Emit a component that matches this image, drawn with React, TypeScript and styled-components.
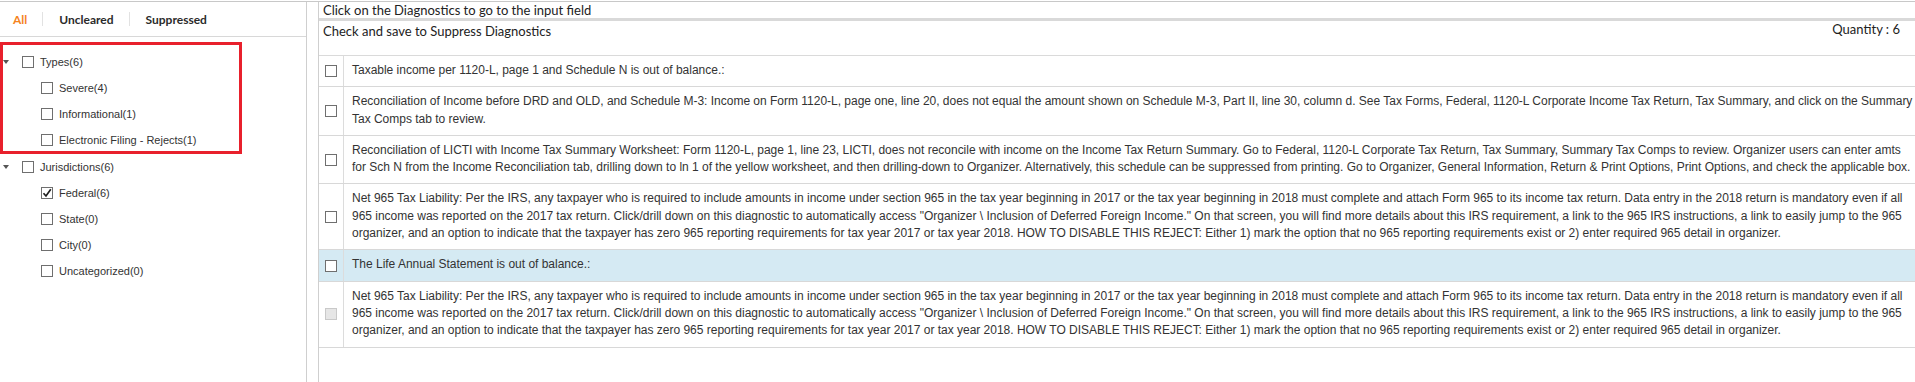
import styled, { createGlobalStyle } from "styled-components";

const GlobalStyle = createGlobalStyle`
    html, body {
        margin: 0;
        padding: 0;
        background: #ffffff;
        overflow: hidden;
    }
    * {
        box-sizing: border-box;
    }
`;

const Page = styled.div`
    display: flex;
    margin-top: 1px;
    height: 381px;
    border-top: 1px solid #c8c8c8;
    font-family: "Liberation Sans", Arial, sans-serif;
    color: #333333;
`;

/* ---------- left filter panel ---------- */

const Sidebar = styled.aside`
    width: 307px;
    flex: none;
    border-right: 1px solid #cfcfcf;
`;

const Tabs = styled.div`
    display: flex;
    align-items: center;
    height: 35px;
    border-bottom: 1px solid #d8d8d8;
    padding-left: 13px;
`;

const Tab = styled.span<{ $active?: boolean }>`
    font-family: Lato, "Open Sans", sans-serif;
    font-weight: 700;
    font-size: 12px;
    color: ${props => props.$active ? '#f5841f' : '#2b2b2b'};
    padding: 0 15px 0 16px;
    &:first-child {
        padding-left: 0;
    }
`;

const TabDivider = styled.span`
    width: 1px;
    height: 14px;
    background: #e2e2e2;
`;

const Tree = styled.div`
    padding: 5px 0 0 3px;
`;

const Highlight = styled.div`
    width: 242px;
    height: 112px;
    margin-left: -3px;
    border: 3px solid #e8202c;
    padding-top: 4px;
`;

const TreeRow = styled.div<{ $child?: boolean }>`
    display: flex;
    align-items: center;
    height: 26px;
    padding-left: ${props => props.$child ? '38px' : '0'};
    font-size: 11px;
    white-space: nowrap;
`;

const Caret = styled.span`
    width: 19px;
    flex: none;
    &::before {
        content: "";
        display: block;
        width: 0;
        height: 0;
        border-left: 3.5px solid transparent;
        border-right: 3.5px solid transparent;
        border-top: 4px solid #555555;
    }
`;

const Box = styled.span<{ $disabled?: boolean }>`
    width: 12px;
    height: 12px;
    flex: none;
    display: inline-flex;
    align-items: center;
    justify-content: center;
    border: 1px solid ${props => props.$disabled ? '#c9c9c9' : '#6f6f6f'};
    background: ${props => props.$disabled ? '#e6e6e6' : '#ffffff'};
`;

const Label = styled.span`
    margin-left: 6px;
`;

function CheckBox({ checked, disabled }: { checked?: boolean, disabled?: boolean }) {
    return (
        <Box $disabled={disabled}>
            {checked &&
                <svg width="10" height="10" viewBox="0 0 10 10">
                    <path d="M1.5 5.2 L4 8 L8.8 1.2" fill="none" stroke="#1e1e1e" strokeWidth="1.7"/>
                </svg>
            }
        </Box>
    );
}

/* ---------- right diagnostics panel ---------- */

const Main = styled.main`
    flex: 1;
    min-width: 0;
    margin-left: 11px;
    border-left: 1px solid #cfcfcf;
`;

const Header = styled.div`
    font-family: Lato, "Open Sans", sans-serif;
    font-size: 13px;
    color: #222222;
    border-bottom: 1px solid #dadada;
`;

const Hint = styled.div`
    height: 16px;
    line-height: 16px;
    padding-left: 4px;
`;

const HintBar = styled.div`
    height: 3px;
    background: #d9d9d9;
`;

const SubHeader = styled.div`
    display: flex;
    justify-content: space-between;
    height: 34px;
    padding: 2px 15px 0 4px;
`;

const Quantity = styled.span`
    margin-top: -2px;
`;

const Row = styled.div<{ $selected?: boolean }>`
    display: flex;
    border-bottom: 1px solid #d8d8d8;
    background: ${props => props.$selected ? '#d5eaf3' : '#ffffff'};
`;

const CheckCell = styled.div`
    width: 25px;
    flex: none;
    display: flex;
    align-items: center;
    justify-content: center;
    border-right: 1px solid #dcdcdc;
`;

const TextCell = styled.div`
    flex: 1;
    min-width: 0;
    padding: 6px 0 7px 8px;
    font-size: 12px;
    line-height: 17.3px;
    letter-spacing: -0.012px;
    color: #333333;
`;

const NET_965 = "Net 965 Tax Liability: Per the IRS, any taxpayer who is required to include amounts in income under section 965 in the tax year beginning in 2017 or the tax year beginning in 2018 must complete and attach Form 965 to its income tax return. Data entry in the 2018 return is mandatory even if all 965 income was reported on the 2017 tax return. Click/drill down on this diagnostic to automatically access \"Organizer \\ Inclusion of Deferred Foreign Income.\" On that screen, you will find more details about this IRS requirement, a link to the 965 IRS instructions, a link to easily jump to the 965 organizer, and an option to indicate that the taxpayer has zero 965 reporting requirements for tax year 2017 or tax year 2018. HOW TO DISABLE THIS REJECT: Either 1) mark the option that no 965 reporting requirements exist or 2) enter required 965 detail in organizer.";

const diagnostics = [
    { text: "Taxable income per 1120-L, page 1 and Schedule N is out of balance.:" },
    { text: "Reconciliation of Income before DRD and OLD, and Schedule M-3: Income on Form 1120-L, page one, line 20, does not equal the amount shown on Schedule M-3, Part II, line 30, column d. See Tax Forms, Federal, 1120-L Corporate Income Tax Return, Tax Summary, and click on the Summary Tax Comps tab to review." },
    { text: "Reconciliation of LICTI with Income Tax Summary Worksheet: Form 1120-L, page 1, line 23, LICTI, does not reconcile with income on the Income Tax Return Summary. Go to Federal, 1120-L Corporate Tax Return, Tax Summary, Summary Tax Comps to review. Organizer users can enter amts for Sch N from the Income Reconciliation tab, drilling down to ln 1 of the yellow worksheet, and then drilling-down to Organizer. Alternatively, this schedule can be suppressed from printing. Go to Organizer, General Information, Return & Print Options, Print Options, and check the applicable box." },
    { text: NET_965 },
    { text: "The Life Annual Statement is out of balance.:", selected: true },
    { text: NET_965, disabled: true },
];

const typeFilters = ["Severe(4)", "Informational(1)", "Electronic Filing - Rejects(1)"];
const jurisdictionFilters = [
    { label: "Federal(6)", checked: true },
    { label: "State(0)" },
    { label: "City(0)" },
    { label: "Uncategorized(0)" },
];

export default function App() {
    return (
        <>
            <GlobalStyle/>
            <Page>
                <Sidebar>
                    <Tabs>
                        <Tab $active>All</Tab>
                        <TabDivider/>
                        <Tab>Uncleared</Tab>
                        <TabDivider/>
                        <Tab>Suppressed</Tab>
                    </Tabs>
                    <Tree>
                        <Highlight>
                            <TreeRow>
                                <Caret/>
                                <CheckBox/>
                                <Label>Types(6)</Label>
                            </TreeRow>
                            {typeFilters.map(label =>
                                <TreeRow $child key={label}>
                                    <CheckBox/>
                                    <Label>{label}</Label>
                                </TreeRow>
                            )}
                        </Highlight>
                        <TreeRow>
                            <Caret/>
                            <CheckBox/>
                            <Label>Jurisdictions(6)</Label>
                        </TreeRow>
                        {jurisdictionFilters.map(item =>
                            <TreeRow $child key={item.label}>
                                <CheckBox checked={item.checked}/>
                                <Label>{item.label}</Label>
                            </TreeRow>
                        )}
                    </Tree>
                </Sidebar>
                <Main>
                    <Header>
                        <Hint>Click on the Diagnostics to go to the input field</Hint>
                        <HintBar/>
                        <SubHeader>
                            <span>Check and save to Suppress Diagnostics</span>
                            <Quantity>Quantity : 6</Quantity>
                        </SubHeader>
                    </Header>
                    {diagnostics.map((d, i) =>
                        <Row key={i} $selected={d.selected}>
                            <CheckCell>
                                <CheckBox disabled={d.disabled}/>
                            </CheckCell>
                            <TextCell>{d.text}</TextCell>
                        </Row>
                    )}
                </Main>
            </Page>
        </>
    );
}
